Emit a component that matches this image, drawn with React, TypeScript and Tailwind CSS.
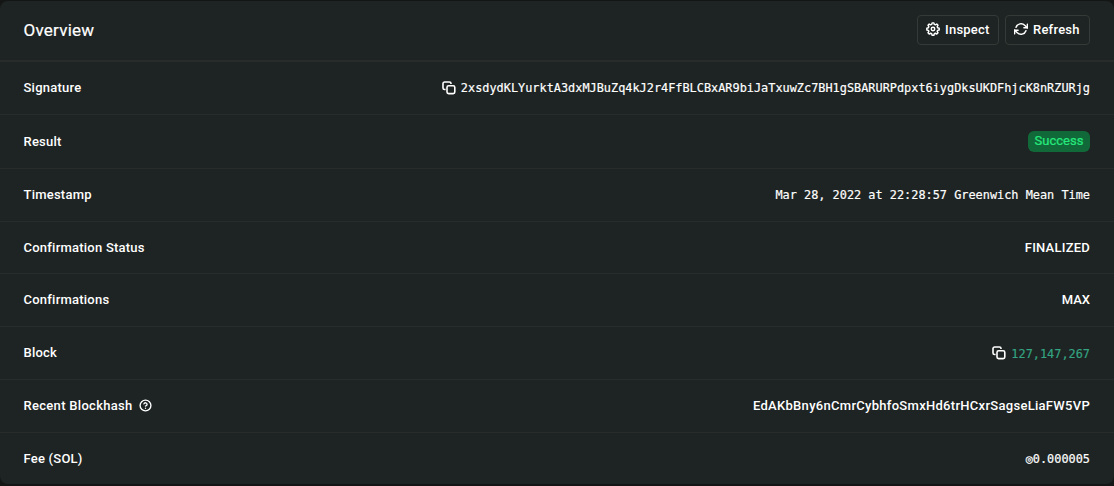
import type { ReactNode } from 'react'
import { FiHelpCircle, FiRefreshCw } from 'react-icons/fi'

const SIGNATURE = '2xsdydKLYurktA3dxMJBuZq4kJ2r4FfBLCBxAR9biJaTxuwZc7BH1gSBARURPdpxt6iygDksUKDFhjcK8nRZURjg'

function CopyIcon() {
  return (
    <svg className="w-[14px] h-[14px] shrink-0" viewBox="0 0 14 14" fill="none" stroke="currentColor" strokeWidth="1.6">
      <path d="M3.6 8.500H2.6A1.6 1.6 0 0 1 1 6.900V2.600A1.600 1.600 0 0 1 2.600 1H7.400A1.600 1.600 0 0 1 9 2.600V3" />
      <rect x="5" y="4.800" width="7.800" height="7.800" rx="1.600" />
    </svg>
  )
}

function GearIcon() {
  return (
    <svg className="w-[14px] h-[14px] shrink-0 -translate-y-px" viewBox="0 0 24 24" fill="none" stroke="currentColor" strokeWidth="2.5" strokeLinejoin="round">
      <path d="M9.700 4.200 10.500 1.500h3l.8 2.700 1.700.7 2.500-1.400 2.100 2.100-1.400 2.500.7 1.700 2.700.8v3l-2.700.8-.7 1.700 1.400 2.500-2.100 2.100-2.500-1.400-1.700.7-.8 2.700h-3l-.8-2.700-1.700-.7-2.500 1.400-2.100-2.100 1.400-2.500-.7-1.700-2.700-.8v-3l2.700-.8.7-1.700-1.400-2.500 2.100-2.100 2.500 1.400z" />
      <circle cx="12" cy="12.100" r="3" />
    </svg>
  )
}

function Row({ label, className, children }: { label: ReactNode; className: string; children: ReactNode }) {
  return (
    <div className={`flex items-center justify-between pl-[23.5px] pr-6 border-[#282d2b] ${className}`}>
      <div className="flex items-center">{label}</div>
      <div className="flex items-center">{children}</div>
    </div>
  )
}

function Button({ icon, className, children }: { icon: ReactNode; className: string; children: ReactNode }) {
  return (
    <button className={`flex items-center h-[30px] rounded border border-[#343a37] pl-[7.5px] gap-[5.5px] ${className}`}>
      {icon}
      <span>{children}</span>
    </button>
  )
}

const mono = "font-['DejaVu_Sans_Mono',monospace] text-[11.88px] tracking-normal [-webkit-text-stroke:0.18px]"

export default function App() {
  return (
    <div className="h-[486px] bg-[#141615] pt-px text-white font-['Roboto',sans-serif] font-medium text-[13px] leading-5 tracking-[0.23px]">
      <div className="h-[483px] rounded-lg bg-[#1e2423] overflow-hidden">
        <div className="flex items-center justify-between h-[61px] border-b-2 border-[#282d2b] pl-[23.5px] pr-6 pb-0.5">
          <h3 className="text-[17px] font-normal [-webkit-text-stroke:0.2px]">Overview</h3>
          <div className="flex gap-[6px]">
            <Button icon={<GearIcon />} className="w-[82px]">Inspect</Button>
            <Button icon={<FiRefreshCw size={14} strokeWidth={2.6} className="-translate-y-px" />} className="w-[85px]">Refresh</Button>
          </div>
        </div>

        <Row label="Signature" className="h-[53px] border-b">
          <CopyIcon />
          <span className={`ml-[5px] ${mono}`}>{SIGNATURE}</span>
        </Row>
        <Row label="Result" className="h-[54px] border-b">
          <span className="w-[62px] h-[21px] rounded-md bg-[#116939] text-[#26e97e] text-center font-normal tracking-normal [-webkit-text-stroke:0.2px]">Success</span>
        </Row>
        <Row label="Timestamp" className="h-[53px] border-b">
          <span className={mono}>Mar 28, 2022 at 22:28:57 Greenwich Mean Time</span>
        </Row>
        <Row label="Confirmation Status" className="h-[52px] border-b">FINALIZED</Row>
        <Row label="Confirmations" className="h-[53px] border-b">
          <span className="tracking-normal">MAX</span>
        </Row>
        <Row label="Block" className="h-[53px] border-b">
          <CopyIcon />
          <span className={`ml-[5px] mt-0.5 text-[#33a382] ${mono}`}>127,147,267</span>
        </Row>
        <Row
          label={
            <>
              <span className="tracking-[0.3px]">Recent Blockhash</span>
              <FiHelpCircle size={13} strokeWidth={2.5} className="ml-[6px] -translate-y-px" />
            </>
          }
          className="h-[53px] border-b"
        >
          <span className="tracking-[0.29px]">EdAKbBny6nCmrCybhfoSmxHd6trHCxrSagseLiaFW5VP</span>
        </Row>
        <Row label="Fee (SOL)" className="h-[52px]">
          <span className={mono}>◎0.000005</span>
        </Row>
      </div>
    </div>
  )
}
